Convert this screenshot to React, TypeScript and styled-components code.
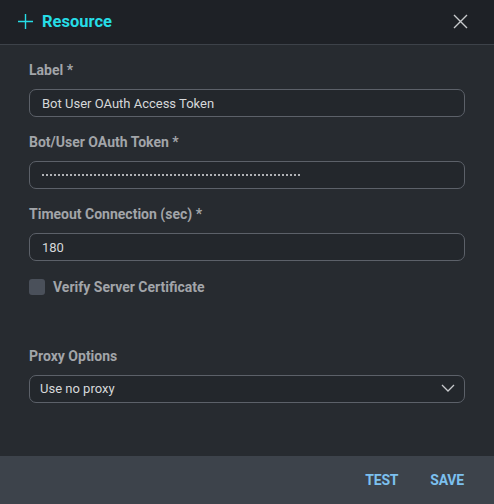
import React from 'react';
import styled, { createGlobalStyle } from 'styled-components';

const GlobalStyle = createGlobalStyle`
  html, body {
    margin: 0;
    padding: 0;
    background: #272b30;
  }
  body {
    font-family: Roboto, "Liberation Sans", sans-serif;
  }
`;

const Dialog = styled.div`
  width: 494px;
  height: 504px;
  display: flex;
  flex-direction: column;
  background: #272b30;
`;

const Header = styled.div`
  height: 45px;
  flex: none;
  box-sizing: border-box;
  display: flex;
  align-items: center;
  justify-content: space-between;
  padding: 0 26px 2px 17px;
  background: #1e2126;
  border-bottom: 1px solid #3d4249;
`;

const Title = styled.div`
  display: flex;
  align-items: center;
  gap: 8px;
  color: #26dde6;
  font-size: 16.5px;
  font-weight: 700;
`;

const CloseButton = styled.button`
  border: none;
  background: none;
  padding: 0;
  display: flex;
  cursor: pointer;
`;

const Body = styled.div`
  flex: 1;
  display: flex;
  flex-direction: column;
  padding: 17px 29px 0 29px;
`;

const Field = styled.div<{ $gap?: number }>`
  display: flex;
  flex-direction: column;
  margin-bottom: ${p => p.$gap ?? 17}px;
`;

const Label = styled.label`
  color: #a2a5a9;
  font-size: 14px;
  font-weight: 700;
  line-height: 17px;
  margin-bottom: 10px;
`;

const Input = styled.input`
  height: 28px;
  box-sizing: border-box;
  border: 1px solid #5c6169;
  border-radius: 7px;
  background: #23272c;
  color: #d6d8da;
  font-family: Roboto, "Liberation Sans", sans-serif;
  font-size: 13px;
  padding: 0 12px;
  outline: none;
`;

const Secret = styled.div`
  height: 28px;
  box-sizing: border-box;
  border: 1px solid #5c6169;
  border-radius: 7px;
  background: #23272c;
  display: flex;
  align-items: center;
  padding: 0 12px;
  gap: 2px;
`;

const Dot = styled.span`
  width: 2px;
  height: 2px;
  border-radius: 1px;
  background: #e0e2e4;
  flex: none;
`;

const CheckRow = styled.label`
  display: flex;
  align-items: center;
  gap: 8px;
  color: #a2a5a9;
  font-size: 14px;
  font-weight: 700;
`;

const Box = styled.span`
  width: 16px;
  height: 16px;
  border-radius: 3px;
  background: #4a505a;
`;

const Spacer = styled.div`
  height: 53px;
`;

const Select = styled.div`
  height: 28px;
  box-sizing: border-box;
  border: 1px solid #5c6169;
  border-radius: 7px;
  background: #23272c;
  color: #d6d8da;
  font-size: 13px;
  display: flex;
  align-items: center;
  justify-content: space-between;
  padding: 0 9px 2px 10px;
`;

const Footer = styled.div`
  height: 48px;
  flex: none;
  display: flex;
  align-items: center;
  justify-content: flex-end;
  gap: 32px;
  padding: 0 30px 0 0;
  background: #3d434b;
`;

const Action = styled.button`
  border: none;
  background: none;
  padding: 0;
  color: #7cc0ef;
  font-family: Roboto, "Liberation Sans", sans-serif;
  font-size: 14px;
  font-weight: 700;
  letter-spacing: -0.2px;
  cursor: pointer;
`;

const App: React.FC = () => {
  return (
    <>
      <GlobalStyle />
      <Dialog>
        <Header>
          <Title>
            <svg width="17" height="17" viewBox="0 0 17 17">
              <path d="M8.5 1v15M1 8.5h15" stroke="#26dde6" strokeWidth="1.4" />
            </svg>
            Resource
          </Title>
          <CloseButton>
            <svg width="15" height="15" viewBox="0 0 15 15">
              <path d="M1 1l13 13M14 1L1 14" stroke="#c8cacd" strokeWidth="1.4" />
            </svg>
          </CloseButton>
        </Header>
        <Body>
          <Field>
            <Label>Label *</Label>
            <Input readOnly value="Bot User OAuth Access Token" />
          </Field>
          <Field>
            <Label>Bot/User OAuth Token *</Label>
            <Secret>
              {Array.from({ length: 65 }).map((_, i) => <Dot key={i} />)}
            </Secret>
          </Field>
          <Field $gap={18}>
            <Label>Timeout Connection (sec) *</Label>
            <Input readOnly value="180" />
          </Field>
          <CheckRow>
            <Box />
            Verify Server Certificate
          </CheckRow>
          <Spacer />
          <Field>
            <Label>Proxy Options</Label>
            <Select>
              Use no proxy
              <svg width="14" height="8" viewBox="0 0 14 8">
                <path d="M1 1l6 6 6-6" stroke="#c8cacd" strokeWidth="1.3" fill="none" />
              </svg>
            </Select>
          </Field>
        </Body>
        <Footer>
          <Action>TEST</Action>
          <Action>SAVE</Action>
        </Footer>
      </Dialog>
    </>
  );
};

export default App;
